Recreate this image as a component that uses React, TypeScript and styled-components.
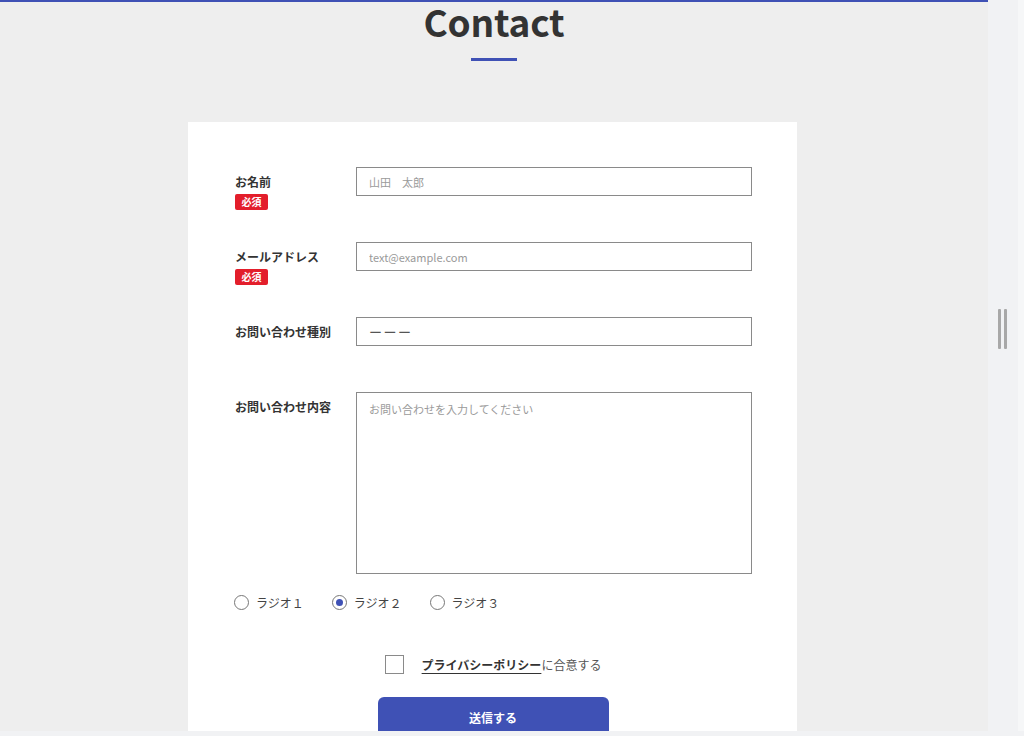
import React from 'react';
import styled, { createGlobalStyle } from 'styled-components';

const GlobalStyle = createGlobalStyle`
  html, body {
    margin: 0;
    padding: 0;
    overflow: hidden;
  }
  body {
    font-family: "Noto Sans CJK JP", "Noto Sans", sans-serif;
    color: #333;
  }
  * {
    box-sizing: border-box;
  }
`;

const BLUE = '#3f51b5';

const Frame = styled.div`
  width: 1024px;
  height: 736px;
  display: grid;
  grid-template-columns: 988px 36px;
  grid-template-rows: 731px 5px;
  background: #f1f2f4;
`;

const Main = styled.main`
  background: #eeeeee;
  border-top: 2px solid ${BLUE};
  overflow: hidden;
  display: flex;
  flex-direction: column;
  align-items: center;
`;

const SidePanel = styled.aside`
  background: linear-gradient(to right, #f1f2f4 30px, #f6f7f8 30px);
  display: flex;
  justify-content: center;
  padding-top: 309px;
  padding-right: 8px;
`;

const Handle = styled.div`
  display: flex;
  gap: 3px;
  height: 40px;

  span {
    width: 3px;
    height: 100%;
    border-radius: 1px;
    background: #a8a8a8;
  }
`;

const BottomStrip = styled.div`
  grid-column: 1 / 3;
  background: #f1f2f4;
`;

const Title = styled.h1`
  flex-shrink: 0;
  margin: 0;
  font-size: 37px;
  line-height: 39px;
  font-weight: 700;
  color: #333;
  letter-spacing: -0.2px;
`;

const TitleBar = styled.div`
  flex-shrink: 0;
  margin-top: 17px;
  width: 46px;
  height: 3px;
  background: ${BLUE};
`;

const Card = styled.section`
  flex: 1 0 auto;
  margin-top: 61px;
  margin-left: -3px;
  width: 609px;
  background: #fff;
  padding: 45px 46px 0 47px;
`;

const Form = styled.form`
  display: grid;
  grid-template-columns: 121px 396px;
  grid-template-rows: 29px 29px 29px 182px;
  row-gap: 46px;
`;

const Label = styled.div`
  padding-top: 6px;
  font-size: 12px;
  line-height: 18px;
  font-weight: 700;
  color: #333;
`;

const Badge = styled.span`
  display: inline-block;
  margin-top: 3px;
  width: 33px;
  height: 16px;
  border-radius: 2px;
  background: #e31e2b;
  color: #fff;
  font-size: 10px;
  line-height: 16px;
  font-weight: 700;
  text-align: center;
`;

const fieldBase = `
  width: 100%;
  height: 100%;
  border: 1px solid #8a8a8a;
  border-radius: 0;
  background: #fff;
  font-family: "Noto Sans CJK JP", "Noto Sans", sans-serif;
  font-size: 11px;
  color: #333;
  outline: none;
  margin: 0;
  &::placeholder {
    color: #9a9a9a;
  }
`;

const Input = styled.input`
  ${fieldBase}
  padding: 0 12px;
`;

const Select = styled.select`
  ${fieldBase}
  appearance: none;
  padding: 0 12px;
  font-size: 13px;
  letter-spacing: 1.5px;
  color: #555;
`;

const TextArea = styled.textarea`
  ${fieldBase}
  resize: none;
  padding: 8px 12px;
  line-height: 1.5;
`;

const RadioRow = styled.div`
  margin-top: 18px;
  margin-left: -1px;
  display: flex;
  gap: 28px;
  height: 20px;
  align-items: center;
`;

const RadioOption = styled.label`
  display: flex;
  align-items: center;
  gap: 7px;
  font-size: 12px;
  color: #444;
  cursor: pointer;
`;

const RadioDot = styled.span<{ $checked?: boolean }>`
  width: 15px;
  height: 15px;
  border-radius: 50%;
  border: 1px solid #777;
  background: #fff;
  display: flex;
  align-items: center;
  justify-content: center;

  &::after {
    content: '';
    width: 7px;
    height: 7px;
    border-radius: 50%;
    background: ${p => (p.$checked ? BLUE : 'transparent')};
  }
`;

const AgreeRow = styled.div`
  margin-top: 43px;
  display: flex;
  justify-content: center;
  align-items: center;
  gap: 18px;
  font-size: 12px;
  color: #555;
`;

const CheckBox = styled.span`
  width: 19px;
  height: 19px;
  border: 1px solid #8a8a8a;
  background: #fff;
`;

const PolicyLink = styled.a`
  color: #333;
  font-weight: 700;
  text-decoration: underline;
  text-underline-offset: 3px;
`;

const Submit = styled.button`
  display: block;
  margin: 23px auto 0;
  width: 231px;
  height: 40px;
  border: none;
  border-radius: 6px;
  background: ${BLUE};
  color: #fff;
  font-family: "Noto Sans CJK JP", "Noto Sans", sans-serif;
  font-size: 12px;
  font-weight: 700;
`;

const radios = ['ラジオ１', 'ラジオ２', 'ラジオ３'];

export default function App() {
  return (
    <>
      <GlobalStyle />
      <Frame>
        <Main>
          <Title>Contact</Title>
          <TitleBar />
          <Card>
            <Form onSubmit={e => e.preventDefault()}>
              <Label>
                お名前
                <br />
                <Badge>必須</Badge>
              </Label>
              <Input placeholder="山田　太郎" />

              <Label>
                メールアドレス
                <br />
                <Badge>必須</Badge>
              </Label>
              <Input placeholder="text@example.com" />

              <Label>お問い合わせ種別</Label>
              <Select defaultValue="">
                <option value="">ーーー</option>
              </Select>

              <Label>お問い合わせ内容</Label>
              <TextArea placeholder="お問い合わせを入力してください" />
            </Form>

            <RadioRow>
              {radios.map((r, i) => (
                <RadioOption key={r}>
                  <RadioDot $checked={i === 1} />
                  {r}
                </RadioOption>
              ))}
            </RadioRow>

            <AgreeRow>
              <CheckBox />
              <span>
                <PolicyLink href="#">プライバシーポリシー</PolicyLink>に合意する
              </span>
            </AgreeRow>

            <Submit type="button">送信する</Submit>
          </Card>
        </Main>
        <SidePanel>
          <Handle>
            <span />
            <span />
          </Handle>
        </SidePanel>
        <BottomStrip />
      </Frame>
    </>
  );
}
